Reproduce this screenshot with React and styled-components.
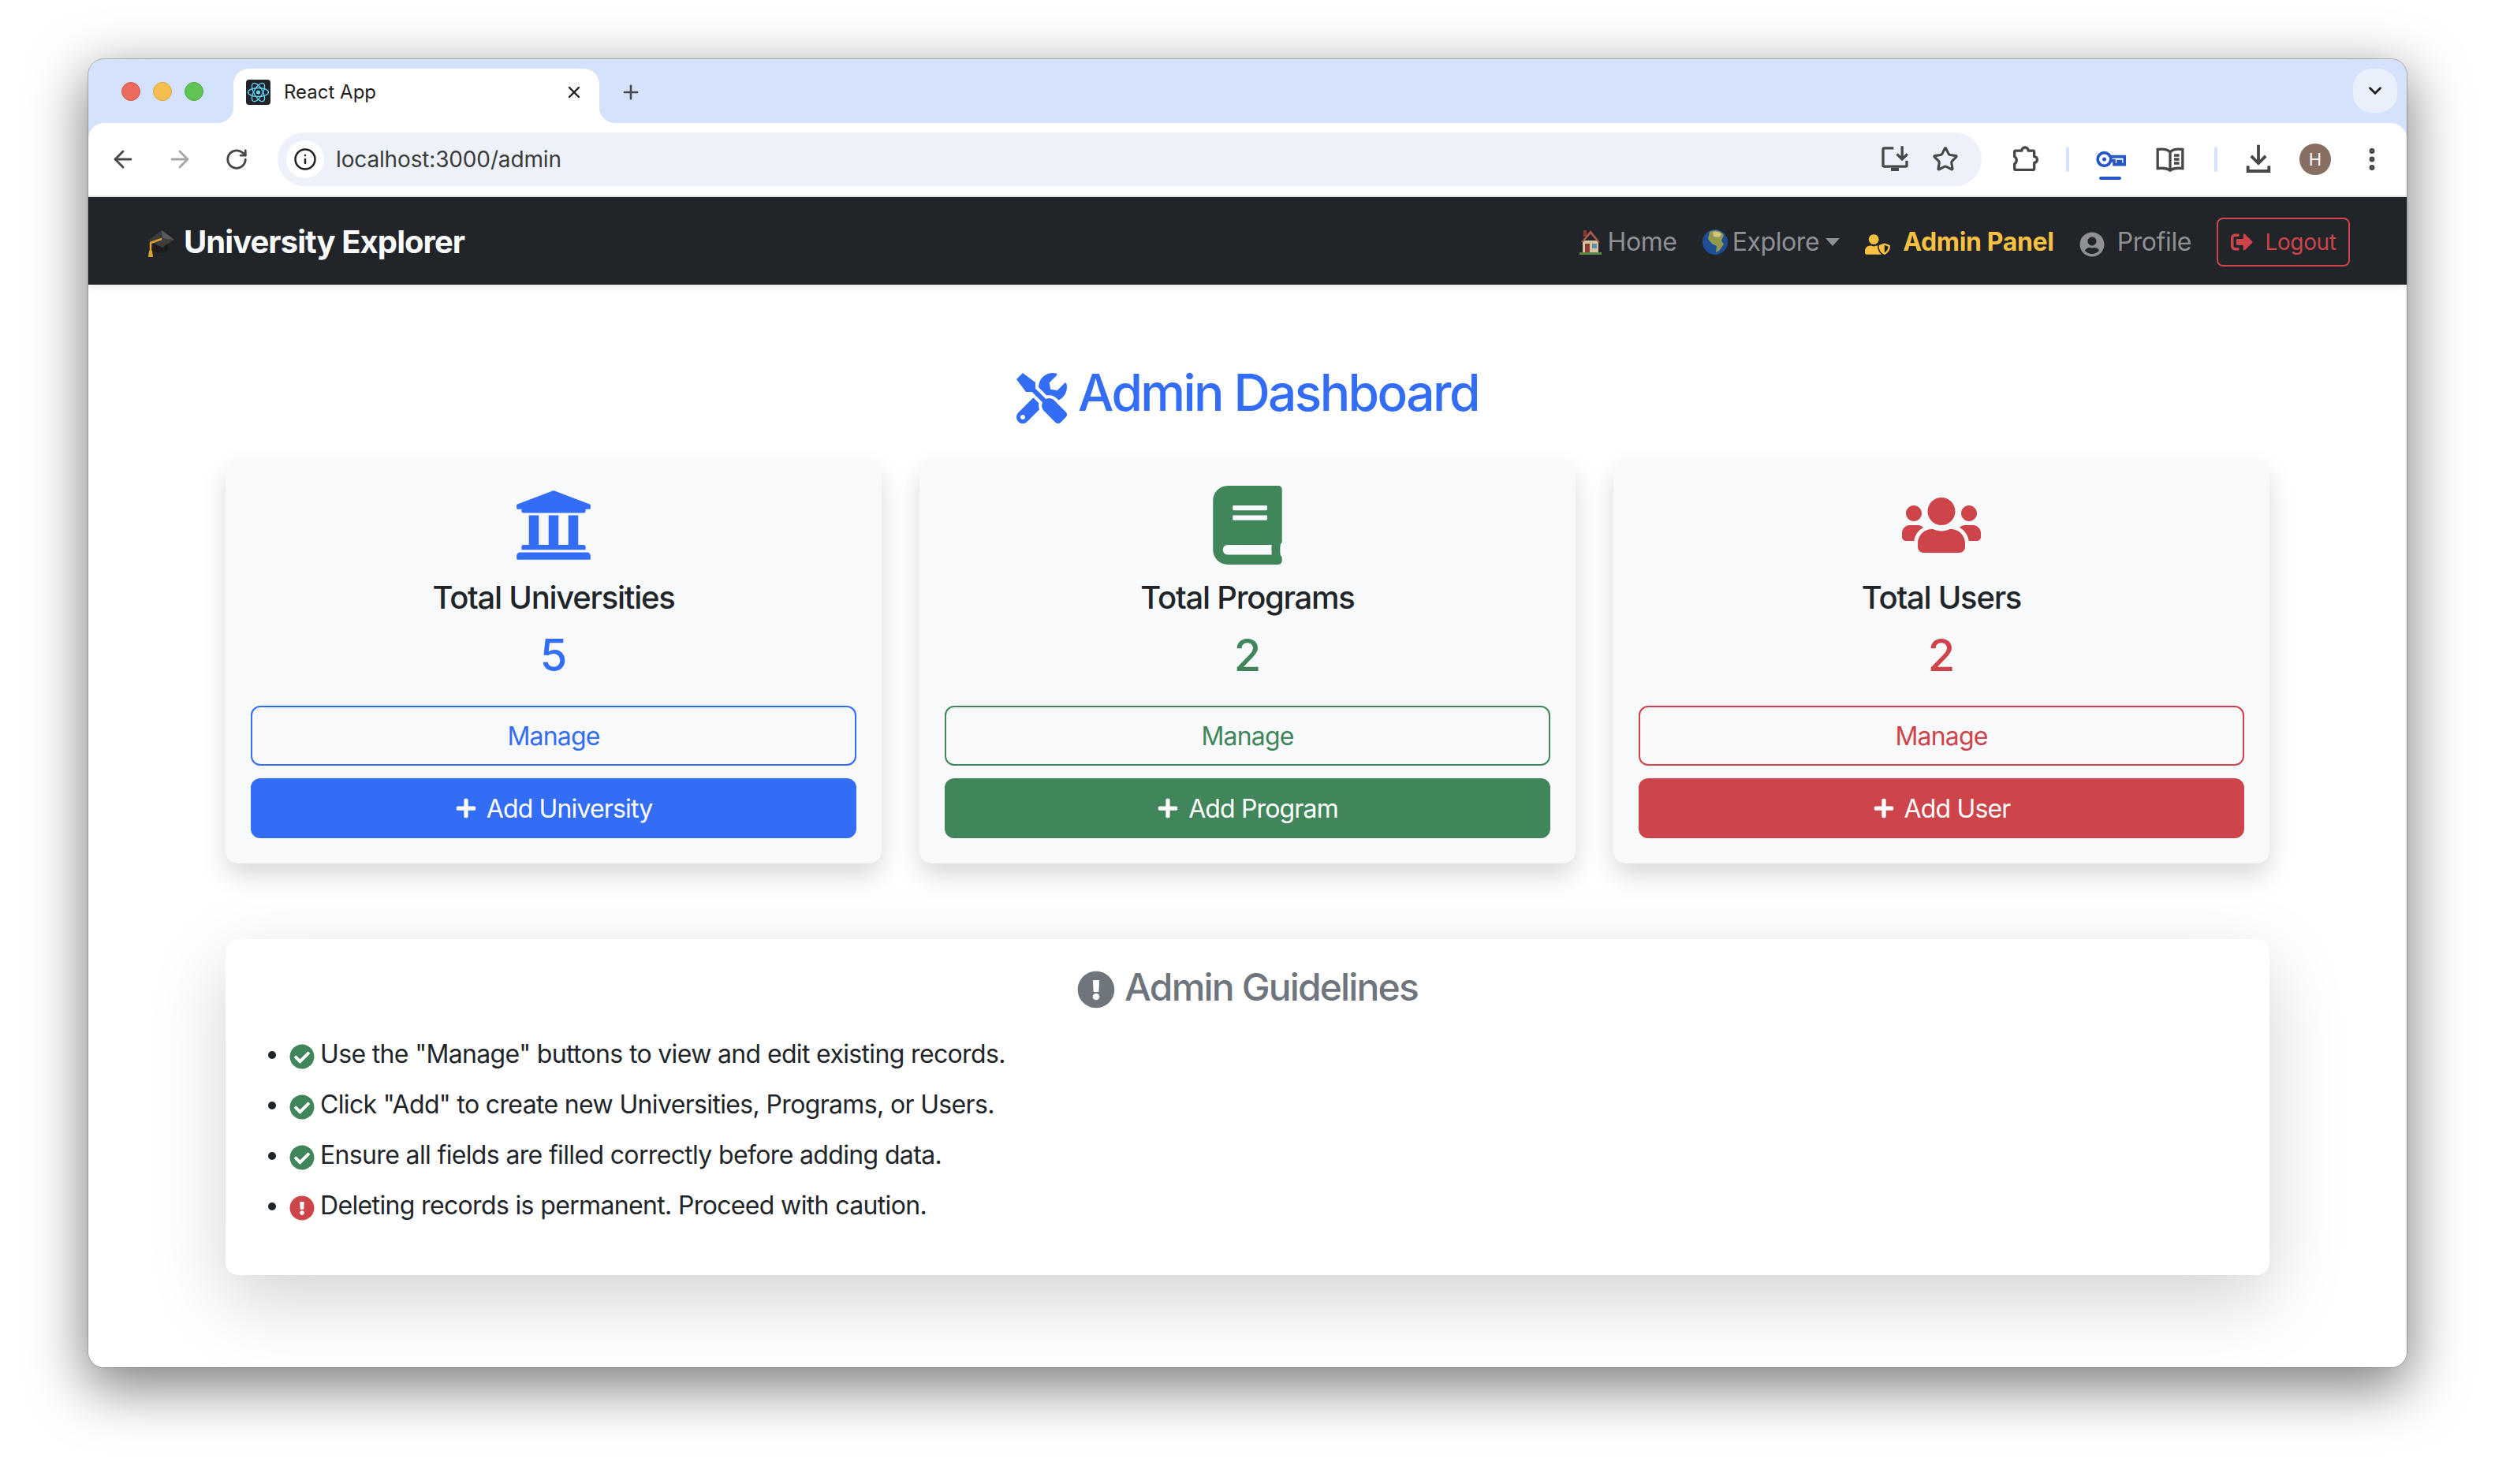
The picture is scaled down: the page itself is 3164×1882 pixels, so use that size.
import React from 'react'
import styled, { createGlobalStyle } from 'styled-components'
import {
    FaBook, FaCheckCircle, FaExclamationCircle, FaPlus, FaSignOutAlt, FaTools,
    FaUniversity, FaUserCircle, FaUserShield, FaUsers,
} from 'react-icons/fa'
import { ArrowLeft, ArrowRight, ChevronDown, EllipsisVertical, Info, Plus, RotateCw, Star, X } from 'lucide-react'

const colors = {
    primary: '#336cf5',
    success: '#41865a',
    danger: '#cd444b',
}

const GlobalStyle = createGlobalStyle`
    html, body {
        margin: 0;
        background: #fff;
        overflow: hidden;
    }
    * {
        box-sizing: border-box;
    }
    body {
        font-family: Inter, "Liberation Sans", sans-serif;
        color: #212529;
    }
`

const Page = styled.div`
    height: 1882px;
    padding: 75px 0 0 112px;
`
const Window = styled.div`
    width: 2940px;
    height: 1659px;
    display: flex;
    flex-direction: column;
    background: #d5e2fb;
    border-radius: 20px;
    overflow: hidden;
    box-shadow: 0 0 0 1px rgba(0, 0, 0, .22), 0 22px 70px 4px rgba(0, 0, 0, .5);
`

/* browser chrome */
const TabStrip = styled.div`
    height: 81px;
    flex: none;
    display: flex;
    align-items: flex-start;
    padding: 0 12px 0 42px;
`
const Lights = styled.div`
    height: 81px;
    display: flex;
    align-items: center;
    gap: 16px;
    margin-right: 38px;
`
const Light = styled.span`
    width: 24px;
    height: 24px;
    border-radius: 50%;
    background: ${p => p.$color};
    border: 1px solid ${p => p.$edge};
`
const Tab = styled.div`
    position: relative;
    width: 464px;
    height: 69px;
    margin-top: 12px;
    display: flex;
    align-items: center;
    padding: 0 20px 10px 16px;
    background: #fff;
    border-radius: 20px 20px 0 0;
    font-size: 24px;
    color: #1f1f1f;

    &::before, &::after {
        content: '';
        position: absolute;
        bottom: 0;
        width: 20px;
        height: 20px;
    }
    &::before {
        left: -20px;
        background: radial-gradient(circle at 0 0, #d5e2fb 19.5px, #fff 20.5px);
    }
    &::after {
        right: -20px;
        background: radial-gradient(circle at 100% 0, #d5e2fb 19.5px, #fff 20.5px);
    }
`
const Favicon = styled.svg`
    width: 31px;
    height: 32px;
    margin-right: 17px;
    flex: none;
`
const TabTitle = styled.span`
    flex: 1;
`
const NewTab = styled.div`
    height: 69px;
    margin: 12px 0 0 26px;
    padding-bottom: 10px;
    display: flex;
    align-items: center;
    color: #474747;
`
const TabMenu = styled.div`
    width: 56px;
    height: 56px;
    margin: 12px 0 0 auto;
    border-radius: 24px;
    background: #e9f0fc;
    display: flex;
    align-items: center;
    justify-content: center;
    color: #1f1f1f;
`
const Toolbar = styled.div`
    height: 92px;
    flex: none;
    display: flex;
    align-items: center;
    padding: 0 24px;
    gap: 32px;
    background: #fff;
    border-radius: 20px 20px 0 0;
`
const ToolIcon = styled.div`
    position: relative;
    width: 40px;
    height: 40px;
    flex: none;
    margin: 0 ${p => p.$pad || 0}px;
    display: flex;
    align-items: center;
    justify-content: center;
    color: ${p => p.$color || '#474747'};

    ${p => p.$active && `
        &::after {
            content: '';
            position: absolute;
            left: 6px;
            bottom: -6px;
            width: 28px;
            height: 4px;
            border-radius: 2px;
            background: #2456c9;
        }
    `}
`
const Omnibox = styled.div`
    flex: 1;
    height: 68px;
    display: flex;
    align-items: center;
    gap: 24px;
    padding: 0 26px 0 11px;
    border-radius: 34px;
    background: #edf2fa;
    margin-right: 3px;
`
const InfoBadge = styled.div`
    width: 48px;
    height: 48px;
    border-radius: 50%;
    background: #fff;
    display: flex;
    align-items: center;
    justify-content: center;
    color: #1f1f1f;
`
const Url = styled.div`
    flex: 1;
    margin-left: -9px;
    font-size: 28px;
    letter-spacing: -.15px;
    color: #3b3b3b;
`
const Separator = styled.div`
    width: 4px;
    height: 32px;
    border-radius: 2px;
    background: #d5e2fb;
    flex: none;
`
const Avatar = styled.div`
    width: 40px;
    height: 40px;
    flex: none;
    border-radius: 50%;
    background: #876e63;
    color: #fff;
    font-size: 22px;
    display: flex;
    align-items: center;
    justify-content: center;
`

/* app navbar */
const Navbar = styled.nav`
    position: relative;
    height: 113px;
    flex: none;
    display: flex;
    align-items: center;
    justify-content: space-between;
    padding: 2px 72px 0;
    background: #212529;
    border-top: 2px solid #e3e3e3;
    box-shadow: 0 4px 8px rgba(0, 0, 0, .08);
`
const Brand = styled.div`
    display: flex;
    align-items: center;
    gap: 11px;
    font-size: 40px;
    font-weight: 700;
    letter-spacing: -.95px;
    color: #f8f9fa;
`
const NavList = styled.div`
    display: flex;
    align-items: center;
    gap: 32px;
`
const NavLink = styled.div`
    display: flex;
    align-items: center;
    gap: ${p => p.$gap || 16}px;
    font-size: 32px;
    font-weight: ${p => (p.$active ? 700 : 400)};
    letter-spacing: ${p => (p.$active ? '-.35px' : '-.4px')};
    color: ${p => (p.$active ? '#f8c142' : '#8e9093')};

    > svg {
        margin-top: ${p => p.$iconDrop || 0}px;
    }
`
const Caret = styled.span`
    width: 0;
    height: 0;
    margin-left: 2px;
    border-left: 9px solid transparent;
    border-right: 9px solid transparent;
    border-top: 10px solid #8e9093;
`
const LogoutButton = styled.div`
    width: 169px;
    height: 62px;
    display: flex;
    align-items: center;
    justify-content: center;
    gap: 16px;
    border: 2px solid ${colors.danger};
    border-radius: 8px;
    font-size: 28px;
    letter-spacing: -.4px;
    color: ${colors.danger};
`

/* dashboard */
const Main = styled.main`
    flex: 1;
    background: #fff;
    padding: 98px 174px 0;
`
const Title = styled.h2`
    margin: 0 0 46px;
    text-align: center;
    font-size: 64px;
    line-height: 77px;
    font-weight: 500;
    letter-spacing: -2.6px;
    color: ${colors.primary};

    svg {
        margin-right: 14px;
        vertical-align: -16px;
    }
`
const CardGrid = styled.div`
    display: grid;
    grid-template-columns: repeat(3, 1fr);
    gap: 48px;
`
const Card = styled.div`
    padding: 33px 32px 32px;
    display: flex;
    flex-direction: column;
    align-items: center;
    text-align: center;
    background: #f8f9fa;
    border-radius: 16px;
    box-shadow: 0 16px 32px rgba(0, 0, 0, .15);
`
const CardIcon = styled.div`
    height: 100px;
    margin-bottom: 18px;
    color: ${p => p.$color};
`
const CardTitle = styled.h5`
    margin: 0 0 16px;
    font-size: 40px;
    line-height: 48px;
    font-weight: 500;
    letter-spacing: -1.25px;
    color: #212529;
`
const CardValue = styled.h3`
    margin: 0 0 30px;
    font-size: 56px;
    line-height: 67px;
    font-weight: 500;
    color: ${p => p.$color};
`
const Button = styled.div`
    width: 100%;
    height: 76px;
    display: flex;
    align-items: center;
    justify-content: center;
    gap: 12px;
    border-radius: 12px;
    border: 2px solid ${p => p.$color};
    font-size: 32px;
    letter-spacing: -.85px;
    background: ${p => (p.$solid ? p.$color : 'transparent')};
    color: ${p => (p.$solid ? '#fff' : p.$color)};
    margin-top: ${p => (p.$solid ? 16 : 0)}px;
`
const Guidelines = styled.section`
    margin-top: 96px;
    padding: 32px;
    background: #fff;
    border-radius: 16px;
    box-shadow: 0 32px 96px rgba(0, 0, 0, .175);
`
const GuideTitle = styled.h4`
    margin: 0 0 32px;
    text-align: center;
    font-size: 48px;
    line-height: 58px;
    font-weight: 500;
    letter-spacing: -1.85px;
    color: #6f757c;

    svg {
        margin-right: 12px;
        vertical-align: -10px;
    }
`
const GuideList = styled.ul`
    margin: 0;
    padding: 0 0 16px 49px;
`
const GuideItem = styled.li`
    margin-bottom: 16px;
    font-size: 32px;
    line-height: 48px;
    letter-spacing: -.65px;

    svg {
        margin-right: 7px;
        vertical-align: -8px;
        color: ${p => p.$color};
    }
`

const CapEmoji = () => (
    <svg width="38" height="38" viewBox="0 0 38 38">
        <path d="M21 4 37 16 22 26 4 17Z" fill="#3d3d3d" />
        <path d="M21 4 37 16 22 14Z" fill="#5a5a5a" />
        <path d="M10 21v8c4 5 14 5 19 1v-9l-7 5Z" fill="#1c1c1c" />
        <path d="M21 15 7 20v11" fill="none" stroke="#e0a030" strokeWidth="2.5" />
        <path d="M5 30h4l1 8H4Z" fill="#e0a030" />
    </svg>
)

const HouseEmoji = () => (
    <svg width="32" height="32" viewBox="0 0 32 32">
        <path d="M7 1h4v8H7Z" fill="#8c3b36" />
        <path d="M6 14h20v15H6Z" fill="#d6c3a0" />
        <path d="M16 1 4 16h3L16 6l9 10h3Z" fill="#a5574c" />
        <path d="M9 18h6v11H9Z" fill="#8a3e34" />
        <path d="M18 18h6v6h-6Z" fill="#5d8fb0" />
        <path d="M2 29h28v3H2Z" fill="#5d8a45" />
    </svg>
)

const GlobeEmoji = () => (
    <svg width="32" height="32" viewBox="0 0 32 32">
        <circle cx="16" cy="16" r="16" fill="#1f4e96" />
        <path d="M9 3c6-3 14-2 18 4l-3 7 3 5-6 8-4 2 1-8-6-3-5-6Z" fill="#8f9a4f" />
        <path d="M13 3c5-1 9 0 11 3l-3 4-7-1Z" fill="#d5c27d" />
    </svg>
)

const InstallIcon = () => (
    <svg width="40" height="40" viewBox="0 0 24 24" fill="none" stroke="currentColor" strokeWidth="2">
        <path d="M11 3.5H4a1 1 0 0 0-1 1v12a1 1 0 0 0 1 1h16a1 1 0 0 0 1-1V13" />
        <path d="M17.5 2v9M13.5 8l4 4 4-4" />
        <path d="M9 18.5h6V21H9Z" fill="currentColor" stroke="none" />
    </svg>
)

const PuzzleIcon = () => (
    <svg width="40" height="40" viewBox="0 0 24 24" fill="none" stroke="currentColor" strokeWidth="2" strokeLinejoin="round">
        <path d="M5 5.5h4.5a2.5 2.5 0 0 1 5 0H18a1 1 0 0 1 1 1V10a2.3 2.3 0 0 1 0 4.600v4.400a1 1 0 0 1-1 1H5a1 1 0 0 1-1-1v-3.500a3.200 3.200 0 0 0 0-5.500V6.500a1 1 0 0 1 1-1Z" />
    </svg>
)

const KeyIcon = () => (
    <svg width="40" height="40" viewBox="0 0 24 24" fill="none" stroke="currentColor" strokeWidth="2.2">
        <circle cx="7.500" cy="12" r="5" />
        <circle cx="7.500" cy="12" r="1.500" fill="currentColor" stroke="none" />
        <path d="M12.500 10H23v6h-3v-2.500h-2V16h-3v-3h-2.500" />
    </svg>
)

const ReaderIcon = () => (
    <svg width="40" height="40" viewBox="0 0 24 24" fill="none" stroke="currentColor" strokeWidth="2">
        <path d="M12 6.500C10 4.500 6 4 2.500 4.500v14.500c3.500-.5 7.500 0 9.500 1.500 2-1.500 6-2 9.500-1.500V4.500C18 4 14 4.500 12 6.500ZM12 6.500V20" />
        <path d="M15 9h4M15 12h4M15 15h4" />
    </svg>
)

const DownloadIcon = () => (
    <svg width="40" height="40" viewBox="0 0 24 24" fill="none" stroke="currentColor" strokeWidth="2.300">
        <path d="M12 1v14M6.500 9.500 12 15l5.500-5.500" />
        <path d="M4 17v4h16v-4" />
    </svg>
)

const statCards = [
    { title: 'Total Universities', value: 5, color: colors.primary, Icon: FaUniversity, add: 'Add University' },
    { title: 'Total Programs', value: 2, color: colors.success, Icon: FaBook, add: 'Add Program' },
    { title: 'Total Users', value: 2, color: colors.danger, Icon: FaUsers, add: 'Add User' },
]

const guideItems = [
    { text: 'Use the "Manage" buttons to view and edit existing records.', Icon: FaCheckCircle, color: colors.success },
    { text: 'Click "Add" to create new Universities, Programs, or Users.', Icon: FaCheckCircle, color: colors.success },
    { text: 'Ensure all fields are filled correctly before adding data.', Icon: FaCheckCircle, color: colors.success },
    { text: 'Deleting records is permanent. Proceed with caution.', Icon: FaExclamationCircle, color: colors.danger },
]

const App = () => {
    return (
        <Page>
            <GlobalStyle />
            <Window>
                <TabStrip>
                    <Lights>
                        <Light $color="#ed6a5e" $edge="#d5574d" />
                        <Light $color="#f5bf4f" $edge="#d9a33c" />
                        <Light $color="#61c554" $edge="#4ea944" />
                    </Lights>
                    <Tab>
                        <Favicon viewBox="0 0 31 32">
                            <rect width="31" height="32" rx="4" fill="#20232a" />
                            <g fill="none" stroke="#61dafb" strokeWidth="1.300">
                                <ellipse cx="15.500" cy="16" rx="13" ry="5.500" />
                                <ellipse cx="15.500" cy="16" rx="13" ry="5.500" transform="rotate(60 15.500 16)" />
                                <ellipse cx="15.500" cy="16" rx="13" ry="5.500" transform="rotate(120 15.500 16)" />
                            </g>
                            <circle cx="15.500" cy="16" r="2.500" fill="#61dafb" />
                        </Favicon>
                        <TabTitle>React App</TabTitle>
                        <X size={24} strokeWidth={2.4} />
                    </Tab>
                    <NewTab><Plus size={28} strokeWidth={2.2} /></NewTab>
                    <TabMenu><ChevronDown size={26} strokeWidth={2.6} /></TabMenu>
                </TabStrip>
                <Toolbar>
                    <ToolIcon><ArrowLeft size={34} strokeWidth={2} /></ToolIcon>
                    <ToolIcon $color="#a5a5a5"><ArrowRight size={34} strokeWidth={2} /></ToolIcon>
                    <ToolIcon><RotateCw size={30} strokeWidth={2.2} /></ToolIcon>
                    <Omnibox>
                        <InfoBadge><Info size={30} strokeWidth={2} /></InfoBadge>
                        <Url>localhost:3000/admin</Url>
                        <ToolIcon><InstallIcon /></ToolIcon>
                        <ToolIcon><Star size={34} strokeWidth={2.2} /></ToolIcon>
                    </Omnibox>
                    <ToolIcon><PuzzleIcon /></ToolIcon>
                    <Separator />
                    <ToolIcon $color="#2456c9" $active><KeyIcon /></ToolIcon>
                    <ToolIcon $pad={4}><ReaderIcon /></ToolIcon>
                    <Separator />
                    <ToolIcon><DownloadIcon /></ToolIcon>
                    <Avatar>H</Avatar>
                    <ToolIcon><EllipsisVertical size={36} strokeWidth={2.6} /></ToolIcon>
                </Toolbar>
                <Navbar>
                    <Brand><CapEmoji />University Explorer</Brand>
                    <NavList>
                        <NavLink $gap={6}><HouseEmoji />Home</NavLink>
                        <NavLink $gap={6}><GlobeEmoji />Explore<Caret /></NavLink>
                        <NavLink $active $iconDrop={6}><FaUserShield size={32} />Admin Panel</NavLink>
                        <NavLink $iconDrop={6}><FaUserCircle size={32} />Profile</NavLink>
                        <LogoutButton><FaSignOutAlt size={28} />Logout</LogoutButton>
                    </NavList>
                </Navbar>
                <Main>
                    <Title><FaTools size={64} />Admin Dashboard</Title>
                    <CardGrid>
                        {statCards.map(({ title, value, color, Icon, add }) => (
                            <Card key={title}>
                                <CardIcon $color={color}><Icon size={100} /></CardIcon>
                                <CardTitle>{title}</CardTitle>
                                <CardValue $color={color}>{value}</CardValue>
                                <Button $color={color}>Manage</Button>
                                <Button $color={color} $solid><FaPlus size={28} />{add}</Button>
                            </Card>
                        ))}
                    </CardGrid>
                    <Guidelines>
                        <GuideTitle><FaExclamationCircle size={48} />Admin Guidelines</GuideTitle>
                        <GuideList>
                            {guideItems.map(({ text, Icon, color }) => (
                                <GuideItem key={text} $color={color}><Icon size={32} />{text}</GuideItem>
                            ))}
                        </GuideList>
                    </Guidelines>
                </Main>
            </Window>
        </Page>
    )
}

export default App
